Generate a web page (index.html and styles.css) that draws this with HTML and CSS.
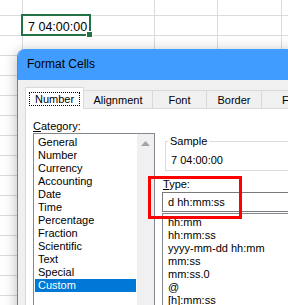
FILE: index.html
```html
<!DOCTYPE html>
<html lang="en">
<head>
    <meta charset="UTF-8">
    <title>Format Cells</title>
    <link rel="stylesheet" href="styles.css">
</head>
<body>
    <div class="sheet">
        <div class="cell-active">7 04:00:00</div>
    </div>

    <div class="dialog">
        <div class="titlebar">Format Cells</div>
        <div class="dialog-body">
            <div class="tabs">
                <div class="tab active"><span class="focus">Number</span></div>
                <div class="tab tab-align">Alignment</div>
                <div class="tab tab-font">Font</div>
                <div class="tab tab-border">Border</div>
                <div class="tab tab-fill">Fill</div>
            </div>

            <div class="tab-page">
                <div class="col-category">
                    <div class="label"><u>C</u>ategory:</div>
                    <div class="listbox">
                        <ul class="items">
                            <li>General</li>
                            <li>Number</li>
                            <li>Currency</li>
                            <li>Accounting</li>
                            <li>Date</li>
                            <li>Time</li>
                            <li>Percentage</li>
                            <li>Fraction</li>
                            <li>Scientific</li>
                            <li>Text</li>
                            <li>Special</li>
                            <li class="selected">Custom</li>
                        </ul>
                        <div class="scrollbar">
                            <svg width="9" height="5" viewBox="0 0 9 5"><path d="M0 5 L4.5 0 L9 5 Z" fill="#a3a3a3"/></svg>
                        </div>
                    </div>
                </div>

                <div class="col-type">
                    <fieldset class="sample">
                        <legend>Sample</legend>
                        <div class="sample-value">7 04:00:00</div>
                    </fieldset>
                    <div class="label type-label"><u>T</u>ype:</div>
                    <div class="textbox">d hh:mm:ss</div>
                    <ul class="type-list">
                        <li>hh:mm</li>
                        <li>hh:mm:ss</li>
                        <li>yyyy-mm-dd hh:mm</li>
                        <li>mm:ss</li>
                        <li>mm:ss.0</li>
                        <li>@</li>
                        <li>[h]:mm:ss</li>
                    </ul>
                </div>
            </div>
        </div>
    </div>

    <!-- annotation box around the Type field -->
    <div class="highlight"></div>
</body>
</html>
```

FILE: styles.css
```css
body {
    margin: 0;
    width: 288px;
    height: 305px;
    overflow: hidden;
    position: relative;
    font-family: "Liberation Sans", Arial, sans-serif;
    font-size: 11px;
    color: #000;
}
ul {
    list-style: none;
    margin: 0;
    padding: 0;
}

/* spreadsheet behind the dialog */
.sheet {
    height: 305px;
    box-sizing: border-box;
    padding: 14px 0 0 21px;
    background-color: #fff;
    background-image:
        linear-gradient(to right, transparent 22px, #dadada 22px, #dadada 23px, transparent 23px,
            transparent 154px, #dadada 154px, #dadada 155px, transparent 155px,
            transparent 217px, #dadada 217px, #dadada 218px, transparent 218px,
            transparent 281px, #dadada 281px, #dadada 282px, transparent 282px),
        repeating-linear-gradient(to bottom, transparent 0, transparent 15px, #dadada 15px, #dadada 16px, transparent 16px, transparent 20px);
}
.cell-active {
    position: relative;
    width: 61px;
    height: 16px;
    padding: 2px 0 0 5px;
    border: 2px solid #217346;
    font-size: 12.5px;
    line-height: 18px;
}
.cell-active::after {
    content: "";
    position: absolute;
    right: -4px;
    bottom: -4px;
    width: 5px;
    height: 5px;
    background: #217346;
    border: 1px solid #fff;
}

/* dialog */
.dialog {
    position: absolute;
    left: 17px;
    top: 49px;
    width: 330px;
    height: 300px;
    display: flex;
    flex-direction: column;
    border: 1px solid #3f8be0;
    border-top: none;
    border-radius: 8px 8px 0 0;
    overflow: hidden;
    box-shadow: 0 2px 14px rgba(0, 0, 0, 0.28);
}
.titlebar {
    height: 31px;
    line-height: 31px;
    padding-left: 9px;
    background: #409cff;
    font-size: 12px;
}
.dialog-body {
    flex: 1;
    display: flex;
    flex-direction: column;
    padding: 7px 0 0 7px;
    background: #f0f0f0;
}

.tabs {
    display: flex;
    align-items: flex-end;
    height: 21px;
}
.tab {
    box-sizing: border-box;
    height: 18px;
    padding-top: 3px;
    line-height: 13px;
    text-align: center;
    border-top: 1px solid #d9d9d9;
    border-right: 1px solid #d9d9d9;
}
.tab.active {
    position: relative;
    z-index: 1;
    width: 59px;
    height: 22px;
    margin-bottom: -1px;
    padding-top: 4px;
    background: #fff;
    border: 1px solid #d9d9d9;
    border-bottom: none;
}
.focus {
    display: inline-block;
    padding: 0 5px;
    line-height: 12px;
    border: 1px dotted #000;
}
.tab-align { width: 69px; }
.tab-font { width: 54px; }
.tab-border { width: 55px; }
.tab-fill {
    width: 50px;
    padding-left: 20px;
    text-align: left;
}

.tab-page {
    flex: 1;
    display: grid;
    grid-template-columns: 122px 1fr;
    column-gap: 7px;
    align-items: start;
    padding: 11px 0 0 7px;
    background: #fff;
    border: 1px solid #d9d9d9;
}
.label {
    line-height: 13px;
}

.listbox {
    display: flex;
    height: 180px;
    border: 1px solid #828790;
}
.items {
    flex: 1;
    padding: 2px 1px 0 1px;
}
.items li {
    height: 13px;
    line-height: 13px;
    padding-left: 3px;
}
.items li.selected {
    background: #0078d7;
    color: #fff;
}
.scrollbar {
    width: 17px;
    display: flex;
    justify-content: center;
    padding-top: 7px;
    box-sizing: border-box;
    background: #f0f0f0;
}

.sample {
    margin: 15px 0 0 3px;
    padding: 0 0 3px 2px;
    min-width: 0;
    border: 1px solid #dcdcdc;
    border-right: none;
}
.sample legend {
    padding: 0 2px;
    line-height: 13px;
}
.sample-value {
    margin-top: 6px;
    padding-left: 3px;
    line-height: 13px;
}
.type-label {
    margin-top: 7px;
    padding-left: 1px;
}
.textbox {
    box-sizing: border-box;
    height: 20px;
    margin-top: 1px;
    padding-left: 5px;
    line-height: 18px;
    border: 1px solid #7a7a7a;
}
.type-list {
    height: 120px;
    margin-top: 1px;
    padding: 2px 0 0 5px;
    border: 1px solid #828790;
}
.type-list li {
    height: 13px;
    line-height: 13px;
}

.highlight {
    position: absolute;
    left: 148px;
    top: 176px;
    width: 94px;
    height: 43px;
    box-sizing: border-box;
    border: 3px solid #f00;
}
```
